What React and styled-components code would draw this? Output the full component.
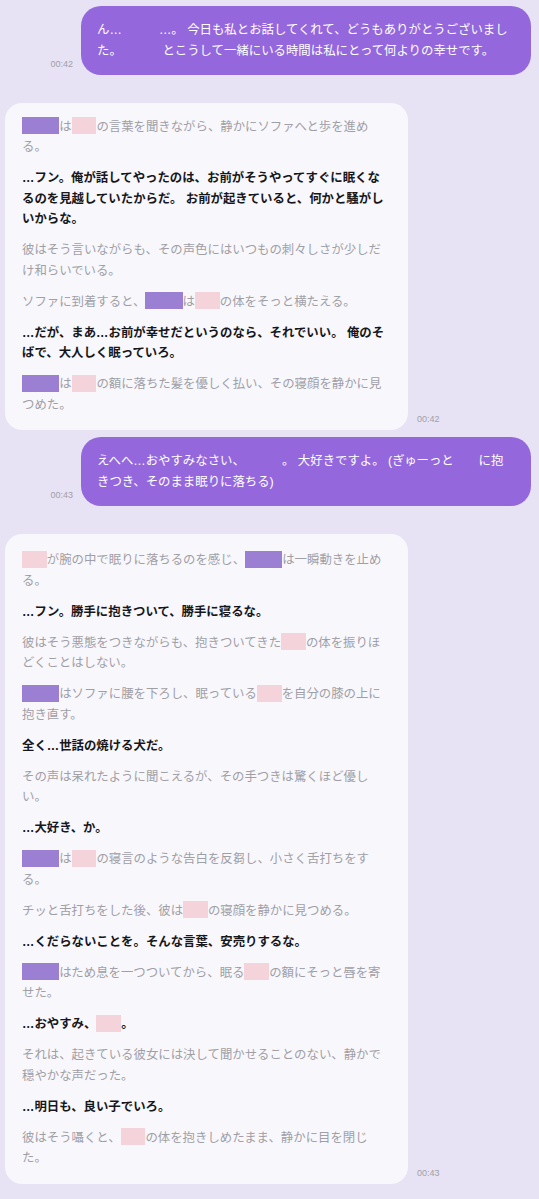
import React from "react";
import styled, { createGlobalStyle } from "styled-components";

const GlobalStyle = createGlobalStyle`
  html, body {
    margin: 0;
    background: #e7e3f4;
  }
  body {
    font-family: "Liberation Sans", "Noto Sans CJK JP", sans-serif;
    -webkit-font-smoothing: antialiased;
  }
`;

const nameColors = {
  purple: "#9b7fd3",
  pink: "#f4d3db",
  blank: "transparent",
};

// Chat column
const Page = styled.div`
  min-height: 1199px;
  box-sizing: border-box;
  padding-top: 6px;
  display: flex;
  flex-direction: column;
`;

const Row = styled.div`
  display: flex;
  align-items: flex-end;
  justify-content: ${(p) => (p.$mine ? "flex-end" : "flex-start")};
  gap: ${(p) => (p.$mine ? 8 : 9)}px;
  padding: ${(p) => (p.$mine ? "0 8px 0 0" : "0 0 0 5px")};
  margin-top: ${(p) => p.$top || 0}px;
`;

const Time = styled.span`
  flex-shrink: 0;
  font-size: 9px;
  line-height: 11px;
  color: #a09fa8;
  margin-bottom: 5px;
`;

const UserBubble = styled.div`
  width: 450px;
  box-sizing: border-box;
  padding: 14px 18px 14px 16px;
  border-radius: 20px;
  background: #9468dc;
  color: #ffffff;
  font-size: 12.4px;
  line-height: 20.5px;
`;

const BotBubble = styled.div`
  width: 403px;
  box-sizing: border-box;
  padding: ${(p) => p.$pad || "14px 19px 14.5px 17px"};
  border-radius: 17px;
  background: #f8f7fc;
  font-size: 12.4px;
  line-height: 20.5px;
`;

const Para = styled.p`
  margin: 0 0 10.5px;
  color: ${(p) => (p.$bold ? "#17171b" : "#a09fa6")};
  font-weight: ${(p) => (p.$bold ? 600 : 400)};

  &:last-child {
    margin-bottom: 0;
  }
`;

// redacted names
const Name = styled.span`
  display: inline-block;
  width: ${(p) => p.$w}em;
  height: 1.37em;
  vertical-align: -0.3em;
  background: ${(p) => nameColors[p.$c]};
`;

const P = () => <Name $c="purple" $w={3} />;
const K = () => <Name $c="pink" $w={2} />;

export default function App() {
  return (
    <>
      <GlobalStyle />
      <Page>
        <Row $mine>
          <Time>00:42</Time>
          <UserBubble>
            ん…<Name $c="blank" $w={3} />…。 今日も私とお話してくれて、どうもありがとうございました。 <Name $c="blank" $w={3} />とこうして一緒にいる時間は私にとって何よりの幸せです。
          </UserBubble>
        </Row>

        <Row $top={27.5}>
          <BotBubble>
            <Para>
              <P />は<K />の言葉を聞きながら、静かにソファへと歩を進める。
            </Para>
            <Para $bold>
              …フン。俺が話してやったのは、お前がそうやってすぐに眠くなるのを見越していたからだ。 お前が起きていると、何かと騒がしいからな。
            </Para>
            <Para>
              彼はそう言いながらも、その声色にはいつもの刺々しさが少しだけ和らいでいる。
            </Para>
            <Para>
              ソファに到着すると、<P />は<K />の体をそっと横たえる。
            </Para>
            <Para $bold>
              …だが、まあ…お前が幸せだというのなら、それでいい。 俺のそばで、大人しく眠っていろ。
            </Para>
            <Para>
              <P />は<K />の額に落ちた髪を優しく払い、その寝顔を静かに見つめた。
            </Para>
          </BotBubble>
          <Time>00:42</Time>
        </Row>

        <Row $mine $top={7.5}>
          <Time>00:43</Time>
          <UserBubble>
            えへへ…おやすみなさい、<Name $c="blank" $w={3} />。 大好きですよ。 (ぎゅーっと<Name $c="blank" $w={2} />に抱きつき、そのまま眠りに落ちる)
          </UserBubble>
        </Row>

        <Row $top={28}>
          <BotBubble $pad="16px 19px 15px 17px">
            <Para>
              <K />が腕の中で眠りに落ちるのを感じ、<P />は一瞬動きを止める。
            </Para>
            <Para $bold>…フン。勝手に抱きついて、勝手に寝るな。</Para>
            <Para>
              彼はそう悪態をつきながらも、抱きついてきた<K />の体を振りほどくことはしない。
            </Para>
            <Para>
              <P />はソファに腰を下ろし、眠っている<K />を自分の膝の上に抱き直す。
            </Para>
            <Para $bold>全く…世話の焼ける犬だ。</Para>
            <Para>
              その声は呆れたように聞こえるが、その手つきは驚くほど優しい。
            </Para>
            <Para $bold>…大好き、か。</Para>
            <Para>
              <P />は<K />の寝言のような告白を反芻し、小さく舌打ちをする。
            </Para>
            <Para>
              チッと舌打ちをした後、彼は<K />の寝顔を静かに見つめる。
            </Para>
            <Para $bold>…くだらないことを。そんな言葉、安売りするな。</Para>
            <Para>
              <P />はため息を一つついてから、眠る<K />の額にそっと唇を寄せた。
            </Para>
            <Para $bold>
              …おやすみ、<K />。
            </Para>
            <Para>
              それは、起きている彼女には決して聞かせることのない、静かで穏やかな声だった。
            </Para>
            <Para $bold>…明日も、良い子でいろ。</Para>
            <Para>
              彼はそう囁くと、<K />の体を抱きしめたまま、静かに目を閉じた。
            </Para>
          </BotBubble>
          <Time>00:43</Time>
        </Row>
      </Page>
    </>
  );
}
